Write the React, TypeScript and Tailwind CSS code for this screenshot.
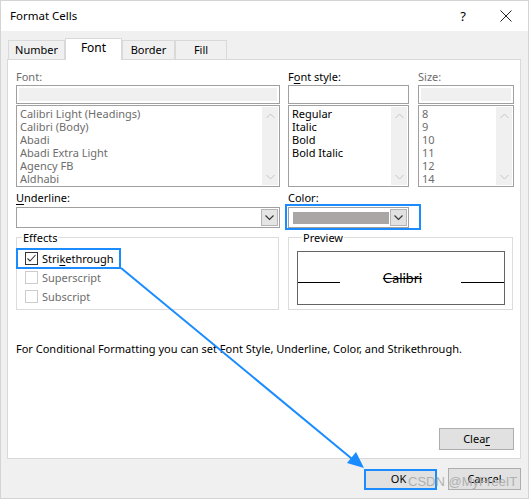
import React from "react";

const Up = () => (
  <svg width="9" height="6" viewBox="0 0 9 6">
    <polyline points="0.5,5 4.5,1 8.5,5" fill="none" stroke="#c4c4c4" strokeWidth="1" />
  </svg>
);
const Down = () => (
  <svg width="9" height="6" viewBox="0 0 9 6">
    <polyline points="0.5,1 4.5,5 8.5,1" fill="none" stroke="#c4c4c4" strokeWidth="1" />
  </svg>
);
const DropChevron = () => (
  <svg width="9" height="6" viewBox="0 0 9 6">
    <polyline points="0.5,0.5 4.5,4.5 8.5,0.5" fill="none" stroke="#333" strokeWidth="1.1" />
  </svg>
);

function ListBox({ items, gray }: { items: string[]; gray?: boolean }) {
  return (
    <div className="mt-[1px] h-[82px] border border-[#a0a0a0] bg-white flex">
      <div className={`flex-1 pl-[3px] pt-[1px] ${gray ? "text-[#6d6d6d]" : "text-black"}`}>
        {items.map((t) => (
          <div key={t} className="leading-[13px] whitespace-nowrap">
            {t}
          </div>
        ))}
      </div>
      <div className="w-[16px] my-[1px] mr-[1px] bg-[#f0f0f0] flex flex-col items-center justify-between pt-[6px] pb-[5px]">
        <Up />
        <Down />
      </div>
    </div>
  );
}

function Tab({ label, active, w }: { label: string; active?: boolean; w: string }) {
  if (active) {
    return (
      <div
        className={`${w} h-[22px] -mb-[1px] relative z-10 bg-white border border-b-0 border-[#d9d9d9] flex items-center justify-center text-[12px] pb-[3px]`}
      >
        {label}
      </div>
    );
  }
  return (
    <div
      className={`${w} h-[19px] bg-[#f0f0f0] border border-b-0 border-[#d9d9d9] flex items-center justify-center text-[11px] pt-[1px]`}
    >
      {label}
    </div>
  );
}

export default function App() {
  return (
    <div className="w-[529px] h-[499px] relative bg-[#f0f0f0] border border-[#d4d4d4] flex flex-col text-[11px] text-black font-['Noto_Sans',sans-serif] overflow-hidden">
      {/* Title bar */}
      <div className="h-[30px] bg-white flex items-center pl-[9px] shrink-0">
        <span className="text-[11.5px] leading-none">Format Cells</span>
        <div className="ml-auto flex items-center mr-[16px]">
          <span className="text-[13px] leading-none mr-[34px]">?</span>
          <svg width="12" height="12" viewBox="0 0 12 12">
            <line x1="0.5" y1="0.5" x2="11.5" y2="11.5" stroke="#222" strokeWidth="1" />
            <line x1="11.5" y1="0.5" x2="0.5" y2="11.5" stroke="#222" strokeWidth="1" />
          </svg>
        </div>
      </div>

      {/* Tabs + panel */}
      <div className="pl-[6px] pt-[7px]">
        <div className="flex items-end h-[21px] pl-[1px]">
          <Tab label="Number" w="w-[57px]" />
          <Tab label="Font" active w="w-[57px]" />
          <Tab label="Border" w="w-[53px]" />
          <Tab label="Fill" w="w-[52px]" />
        </div>
        <div className="w-[514px] h-[400px] bg-white border border-[#d9d9d9] flex flex-col pl-[8px] pt-[9px] pr-[6px] pb-[8px]">
          {/* Row 1 */}
          <div className="flex">
            <div className="w-[264px]">
              <div className="leading-[15px] text-[#6d6d6d]">Font:</div>
              <div className="mt-[1px] h-[19px] border border-[#a0a0a0] p-[2px]">
                <div className="w-full h-full bg-[#f0f0f0]" />
              </div>
              <ListBox
                gray
                items={[
                  "Calibri Light (Headings)",
                  "Calibri (Body)",
                  "Abadi",
                  "Abadi Extra Light",
                  "Agency FB",
                  "Aldhabi",
                ]}
              />
            </div>
            <div className="w-[121px] ml-[8px]">
              <div className="leading-[15px]">
                F<span className="underline underline-offset-2">o</span>nt style:
              </div>
              <div className="mt-[1px] h-[19px] border border-[#a0a0a0] bg-white" />
              <ListBox items={["Regular", "Italic", "Bold", "Bold Italic"]} />
            </div>
            <div className="w-[96px] ml-[9px]">
              <div className="leading-[15px] text-[#6d6d6d]">Size:</div>
              <div className="mt-[1px] h-[19px] border border-[#a0a0a0] p-[2px]">
                <div className="w-full h-full bg-[#f0f0f0]" />
              </div>
              <ListBox gray items={["8", "9", "10", "11", "12", "14"]} />
            </div>
          </div>

          {/* Row 2 */}
          <div className="flex mt-[3px]">
            <div className="w-[264px]">
              <div className="leading-[15px]">
                <span className="underline underline-offset-2">U</span>nderline:
              </div>
              <div className="mt-[2px] h-[21px] border border-[#a0a0a0] bg-white flex justify-end">
                <div className="w-[17px] m-[1px] bg-[#e5e5e5] border border-[#b5b5b5] flex items-center justify-center">
                  <DropChevron />
                </div>
              </div>
            </div>
            <div className="w-[121px] ml-[8px]">
              <div className="leading-[15px]">
                <span className="underline underline-offset-2">C</span>olor:
              </div>
              <div className="mt-[2px] h-[21px] relative">
                <div className="absolute left-[-3px] top-[-3px] w-[136px] h-[26px] border-2 border-[#1a8cff]" />
                <div className="h-full border border-[#a0a0a0] bg-white flex items-center pl-[4px]">
                  <div className="w-[96px] h-[12px] bg-[#aaa6a6]" />
                  <div className="ml-auto w-[17px] h-[17px] mr-[1px] bg-[#e1e1e1] border border-[#b5b5b5] flex items-center justify-center">
                    <DropChevron />
                  </div>
                </div>
              </div>
            </div>
          </div>

          {/* Row 3 */}
          <div className="flex mt-[2px]">
            <fieldset className="w-[263px] border border-[#dcdcdc] pb-[3px] min-w-0">
              <legend className="ml-[5px] px-[1px] leading-[15px]">Effects</legend>
              <div className="relative h-[19px] mt-[4px] flex items-center pl-[8px]">
                <div className="absolute left-[-1px] top-[-1px] w-[105px] h-[21px] border-2 border-[#1a8cff]" />
                <div className="w-[13px] h-[13px] border border-[#333] flex items-center justify-center">
                  <svg width="11" height="11" viewBox="0 0 11 11">
                    <polyline points="1.5,5.5 4,8 9.5,2" fill="none" stroke="#333" strokeWidth="1.1" />
                  </svg>
                </div>
                <span className="ml-[4px] leading-[15px]">
                  Stri<span className="underline underline-offset-2">k</span>ethrough
                </span>
              </div>
              <div className="h-[19px] flex items-center pl-[8px] text-[#6d6d6d]">
                <div className="w-[13px] h-[13px] border border-[#cccccc]" />
                <span className="ml-[4px] leading-[15px]">Superscript</span>
              </div>
              <div className="h-[19px] flex items-center pl-[8px] text-[#6d6d6d]">
                <div className="w-[13px] h-[13px] border border-[#cccccc]" />
                <span className="ml-[4px] leading-[15px]">Subscript</span>
              </div>
            </fieldset>
            <fieldset className="w-[225px] ml-[9px] border border-[#dcdcdc] pl-[8px] pb-[4px] min-w-0">
              <legend className="ml-[5px] px-[1px] leading-[15px]">Preview</legend>
              <div className="mt-[6px] w-[208px] h-[54px] border border-[#646464] flex items-center">
                <div className="w-[42px] h-[1px] bg-black mt-[8px]" />
                <div className="flex-1 flex justify-center">
                  <span className="text-[14px] leading-none line-through font-['Lato',sans-serif] ml-[4px]">
                    Calibri
                  </span>
                </div>
                <div className="w-[43px] h-[1px] bg-black mt-[8px]" />
              </div>
            </fieldset>
          </div>

          <div className="mt-[31px] leading-[15px] whitespace-nowrap">
            For Conditional Formatting you can set Font Style, Underline, Color, and Strikethrough.
          </div>

          <div className="mt-auto flex justify-end">
            <div className="w-[75px] h-[22px] bg-[#e1e1e1] border border-[#adadad] flex items-center justify-center">
              Clea<span className="underline underline-offset-2">r</span>
            </div>
          </div>
        </div>
      </div>

      {/* Bottom buttons */}
      <div className="flex justify-end items-center mt-[9px] pr-[7px]">
        <div className="w-[73px] h-[21px] border-2 border-[#1a8cff] bg-[#e1e1e1] flex items-center justify-center">
          <span className="-ml-[4px]">OK</span>
        </div>
        <div className="ml-[11px] w-[73px] h-[22px] border border-[#adadad] bg-[#e1e1e1] flex items-center justify-center">
          Cancel
        </div>
      </div>

      {/* Watermark */}
      <div className="absolute left-[407px] top-[473px] text-[13px] leading-[16px] text-[#b0b0b0] font-['Liberation_Sans',sans-serif] pointer-events-none whitespace-nowrap">
        CSDN @MyFreeIT
      </div>

      {/* Annotation arrow */}
      <svg className="absolute left-0 top-0 pointer-events-none" width="529" height="499" viewBox="0 0 529 499">
        <line x1="120" y1="267" x2="356" y2="462" stroke="#1a8cff" strokeWidth="2" />
        <polygon points="363,467 346,462 355,451" fill="#1a8cff" />
      </svg>
    </div>
  );
}
